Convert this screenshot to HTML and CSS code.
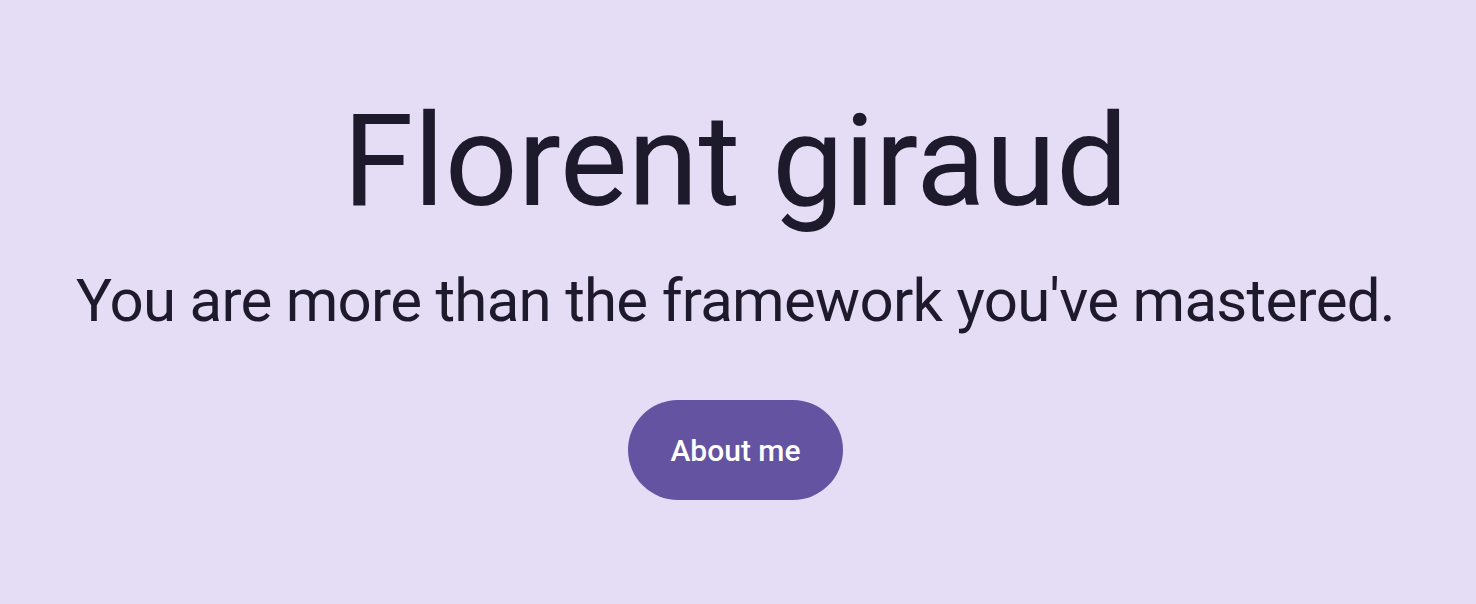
FILE: index.html
```html
<!DOCTYPE html>
<html lang="en">
<head>
<meta charset="utf-8">
<title>Florent giraud</title>
<link rel="stylesheet" href="styles.css">
</head>
<body>
<main class="hero">
  <h1 class="hero-title">Florent giraud</h1>
  <p class="hero-subtitle">You are more than the framework you've mastered.</p>
  <a class="hero-button" href="#">About me</a>
</main>
</body>
</html>
```

FILE: styles.css
```css
html, body {
  margin: 0;
  padding: 0;
}
body {
  background: #e5ddf5;
  color: #1d1a2b;
  font-family: Roboto, "Noto Sans", sans-serif;
  height: 604px;
  overflow: hidden;
}
.hero {
  display: flex;
  flex-direction: column;
  align-items: center;
  padding: 86px 5px 0 0;
}
.hero-title {
  margin: 0;
  font-size: 128px;
  font-weight: 400;
  line-height: 150px;
}
.hero-subtitle {
  margin: 30px 0 0;
  font-size: 60px;
  font-weight: 400;
  line-height: 70px;
  letter-spacing: -0.72px;
}
.hero-button {
  margin-top: 64px;
  display: flex;
  align-items: center;
  justify-content: center;
  width: 215px;
  height: 100px;
  border-radius: 50px;
  background: #6353a0;
  color: #ffffff;
  text-decoration: none;
  font-size: 30px;
  font-weight: 500;
}
```
